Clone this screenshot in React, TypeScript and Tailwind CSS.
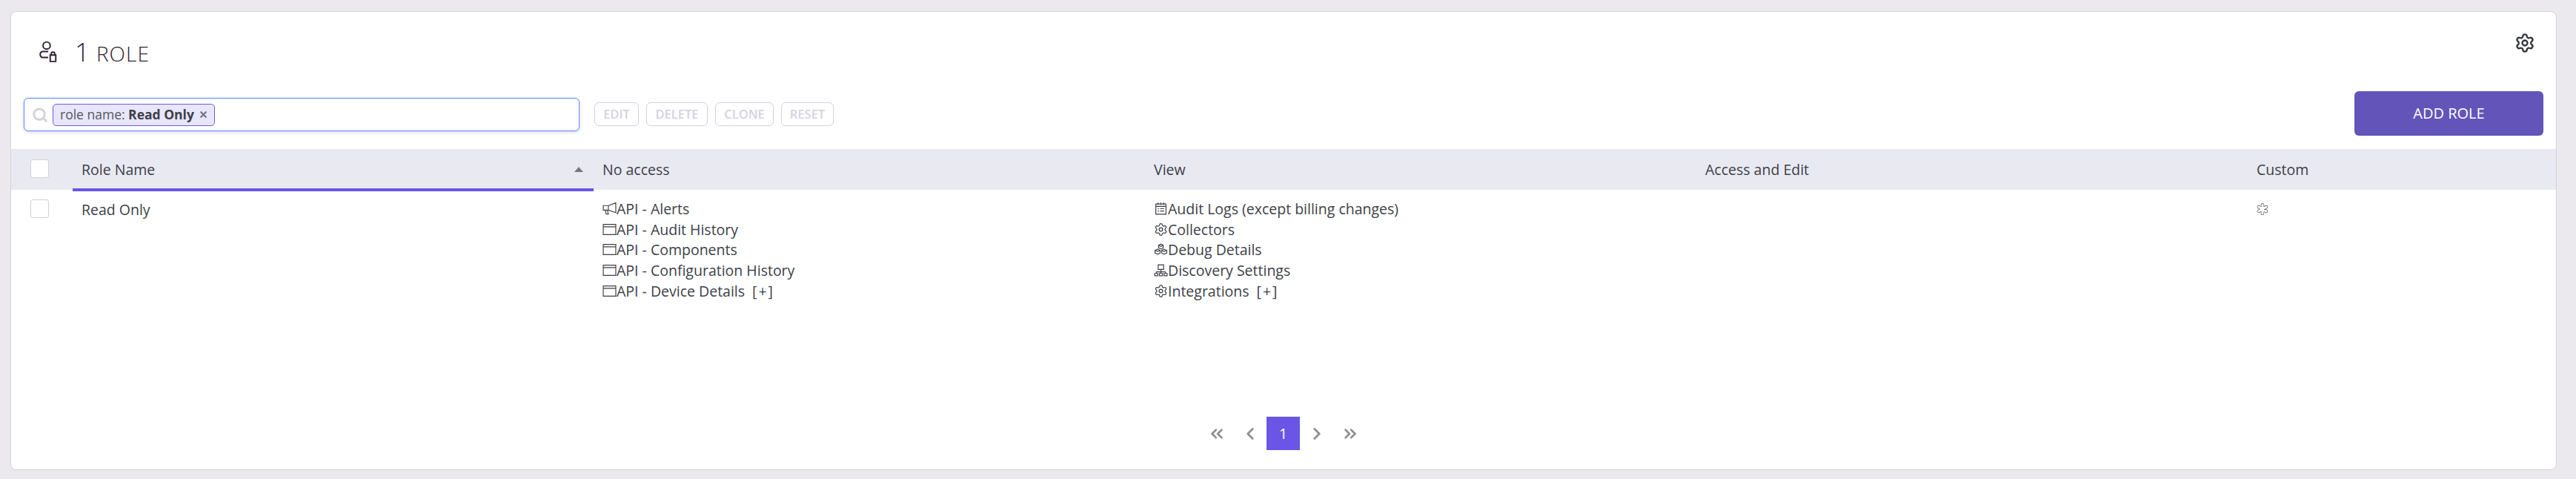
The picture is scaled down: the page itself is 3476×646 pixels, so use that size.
import React from 'react';
import { Search, Settings, X, ChevronLeft, ChevronRight, ChevronsLeft, ChevronsRight } from 'lucide-react';

const Ico = ({ children }: { children: React.ReactNode }) => (
  <svg viewBox="0 0 18 18" fill="none" stroke="#3c3f47" strokeWidth="1.100" className="h-[19px] w-[19px] shrink-0">
    {children}
  </svg>
);

const Megaphone = () => (
  <Ico>
    <path d="M17 1.500v12.500L7.500 10.800H1V5h6.500zM7.500 5v5.800M3.500 10.800l1.200 5h2.800l-1.200-5" />
  </Ico>
);

const WindowIcon = () => (
  <Ico>
    <path d="M1 2.500h16v13H1zM1 5.500h16" />
  </Ico>
);

const Calendar = () => (
  <Ico>
    <path d="M2.500 3h13v13h-13zM2.500 6h13M5.500 1.200V4M9 1.200V4M12.500 1.200V4M5 9h1.500M8 9h5M5 12h1.500M8 12h5" />
  </Ico>
);

const Gear = () => <Settings size={19} strokeWidth={1.600} className="shrink-0 text-[#3c3f47]" />;

const Cubes = () => (
  <Ico>
    <path d="M9 2l3 1.500v3.200L9 8.200 6 6.700V3.500zM5 8.500l3 1.500v3.500L5 15l-3.500-1.500V10zM13 8.500l3.500 1.500v3.500L13 15l-3-1.500V10zM6 3.500l3 1.500 3-1.500M1.500 10L5 11.500 8 10M10 10l3 1.500 3.500-1.500" />
  </Ico>
);

const Network = () => (
  <Ico>
    <path d="M5.500 2h7v6h-7zM9 8v3M3 11h12M3 11v2M9 11v2M15 11v2M1 13h4v3H1zM7 13h4v3H7zM13 13h4v3h-4z" />
  </Ico>
);

const PermissionList = ({ rows }: { rows: { icon: React.ReactNode; label: string; more?: boolean }[] }) => (
  <div className="flex flex-col">
    {rows.map((row) => (
      <div key={row.label} className="flex h-[27.6px] items-center">
        {row.icon}
        <span>{row.label}</span>
        {row.more && <span className="ml-[10px] tracking-[2px] text-[#3c3f47]">[+]</span>}
      </div>
    ))}
  </div>
);

const noAccess = [
  { icon: <Megaphone />, label: 'API - Alerts' },
  { icon: <WindowIcon />, label: 'API - Audit History' },
  { icon: <WindowIcon />, label: 'API - Components' },
  { icon: <WindowIcon />, label: 'API - Configuration History' },
  { icon: <WindowIcon />, label: 'API - Device Details', more: true },
];

const view = [
  { icon: <Calendar />, label: 'Audit Logs (except billing changes)' },
  { icon: <Gear />, label: 'Collectors' },
  { icon: <Cubes />, label: 'Debug Details' },
  { icon: <Network />, label: 'Discovery Settings' },
  { icon: <Gear />, label: 'Integrations', more: true },
];

const Checkbox = () => <div className="h-[25px] w-[25px] rounded-[3px] border border-[#d0d0d6] bg-white" />;

const ActionButton = ({ label, width }: { label: string; width: string }) => (
  <button className={`h-[32px] rounded-[6px] border border-[#d3d1e3] bg-white text-[16.500px] leading-none font-semibold text-[#d3d1e3] ${width}`}>
    {label}
  </button>
);

const PagerIcon = ({ children }: { children: React.ReactNode }) => (
  <span className="flex h-[45px] w-[45px] items-center justify-center text-[#8e8e8e]">{children}</span>
);

const COLS = 'grid grid-cols-[83px_703px_744px_744px_744px_1fr]';

const App: React.FC = () => {
  return (
    <div className="h-[646px] w-[3476px] overflow-hidden bg-[#ebe9ed] pt-[15px] pl-[14px] font-['Open_Sans',sans-serif] text-[19.500px] text-[#3c3f47]">
      <div className="flex h-[619px] w-[3436px] flex-col rounded-[8px] border border-[#d3d1dc] bg-white">
        <div className="flex h-[107px] items-start justify-between pt-[34px] pr-[28px] pl-[36px]">
          <div className="flex items-center gap-[24px] pt-[2px]">
            <svg viewBox="0 0 24 28" fill="none" stroke="#2f2233" strokeWidth="1.800" className="h-[30px] w-[26px]">
              <circle cx="11" cy="6" r="4.500" />
              <path d="M13 13.500H5.500a4 4 0 0 0 0 7.500H13" />
              <path d="M15.500 18h7v8h-7zM16.800 18v-1.500a2.200 2.200 0 0 1 4.400 0V18" />
            </svg>
            <div className="flex items-baseline gap-[9px] font-light leading-none text-[#2f2233]">
              <span className="text-[35px]">1</span>
              <span className="text-[28px] tracking-[1px]">ROLE</span>
            </div>
          </div>
          <Settings size={28} strokeWidth={2} className="mt-[-6px] text-[#33363d]" />
        </div>
        <div className="flex h-[78px] items-start justify-between pr-[17px] pl-[17px]">
          <div className="flex items-start">
            <div className="mt-[9px] flex h-[45px] w-[750px] items-center gap-[6px] rounded-[6px] border border-[#5b8cff] bg-white pl-[10px] shadow-[0_1px_4px_rgba(60,60,120,0.25)]">
              <Search size={22} strokeWidth={3} className="text-[#cfd0da]" />
              <div className="flex h-[30px] w-[219px] items-center justify-between rounded-[5px] border border-[#6b5ce7] bg-[#e8e6fa] pr-[8px] pl-[9px] text-[17.500px] whitespace-nowrap">
                <span className="text-[#55585f]">
                  role name: <b className="font-bold text-[#3c3f47]">Read Only</b>
                </span>
                <X size={13} strokeWidth={4.500} className="text-[#77777f]" />
              </div>
            </div>
            <div className="mt-[15px] ml-[20px] flex gap-[10px]">
              <ActionButton label="EDIT" width="w-[60px]" />
              <ActionButton label="DELETE" width="w-[83px]" />
              <ActionButton label="CLONE" width="w-[79px]" />
              <ActionButton label="RESET" width="w-[71px]" />
            </div>
          </div>
          <button className="h-[60px] w-[255px] rounded-[6px] bg-[#6354ba] text-[20px] text-white">ADD ROLE</button>
        </div>
        <div className={`${COLS} h-[55px] items-center bg-[#e9e9f2]`}>
          <div className="pb-[3px] pl-[26px]">
            <Checkbox />
          </div>
          <div className="relative flex h-full items-center justify-between pr-[14px] pl-[12px]">
            Role Name
            <span className="h-0 w-0 border-x-[6px] border-b-[7px] border-x-transparent border-b-[#77777f]" />
            <span className="absolute right-0 bottom-[-2px] left-0 h-[4px] bg-[#6a55e6]" />
          </div>
          <div className="pl-[12px]">No access</div>
          <div className="pl-[12px]">View</div>
          <div className="pl-[12px]">Access and Edit</div>
          <div className="pl-[12px]">Custom</div>
        </div>
        <div className={`${COLS} h-[306px] items-start pt-[13px]`}>
          <div className="pl-[26px]">
            <Checkbox />
          </div>
          <div className="pl-[12px] leading-[27px]">Read Only</div>
          <div className="mt-[-1px] pl-[12px]">
            <PermissionList rows={noAccess} />
          </div>
          <div className="mt-[-1px] pl-[12px]">
            <PermissionList rows={view} />
          </div>
          <div />
          <div className="mt-[5px] pl-[12px]">
            <svg viewBox="0 0 16 16" strokeLinecap="round" className="h-[16px] w-[16px]">
              <g stroke="#33363d" strokeWidth="4.400">
                <path d="M8 2.200v11.600M3 5.100l10 5.800M3 10.900l10-5.800" />
              </g>
              <g stroke="#ffffff" strokeWidth="3.200">
                <path d="M8 2.200v11.600M3 5.100l10 5.800M3 10.900l10-5.800" />
              </g>
            </svg>
          </div>
        </div>
        <div className="flex justify-center gap-0 pr-[1px]">
          <PagerIcon>
            <ChevronsLeft size={26} strokeWidth={2.500} />
          </PagerIcon>
          <PagerIcon>
            <ChevronLeft size={26} strokeWidth={2.500} />
          </PagerIcon>
          <span className="flex h-[45px] w-[45px] items-center justify-center bg-[#6a55e6] text-white">1</span>
          <PagerIcon>
            <ChevronRight size={26} strokeWidth={2.500} />
          </PagerIcon>
          <PagerIcon>
            <ChevronsRight size={26} strokeWidth={2.500} />
          </PagerIcon>
        </div>
      </div>
    </div>
  );
};

export default App;
